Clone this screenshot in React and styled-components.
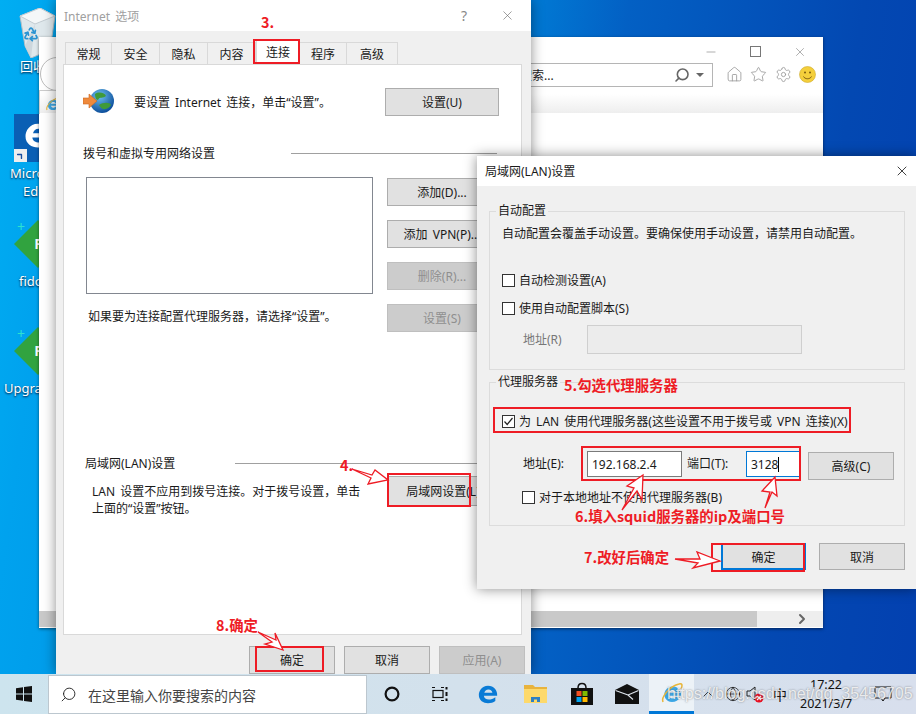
import React from "react";
import styled, { createGlobalStyle } from "styled-components";
import { Home, Star, Settings, Search, X, Minus, ChevronRight, ChevronUp, Globe, Recycle } from "lucide-react";

const UI_FONT = `"Noto Sans", "Noto Sans CJK SC", sans-serif`;

const GlobalStyle = createGlobalStyle`
  html, body {
    margin: 0;
    padding: 0;
    background: #0078d4;
  }
  * {
    box-sizing: border-box;
  }
`;

const Desktop = styled.div`
  width: 916px;
  height: 714px;
  display: flex;
  flex-direction: column;
  position: relative;
  overflow: hidden;
  font-family: ${UI_FONT};
  font-size: 12px;
  word-spacing: 2px;
  color: #1a1a1a;
  background: linear-gradient(98deg, #00aef2 0%, #00a2ee 8%, #0080d8 50%, #0360c4 62%, #0348b2 85%, #0340b0 100%);
`;

const Workspace = styled.div`
  flex: 1;
  position: relative;
  overflow: hidden;
`;

/* desktop shortcuts */
const Shortcut = styled.div`
  position: absolute;
  left: 0;
  top: ${(p) => p.$top}px;
  width: 40px;
  height: 60px;
  color: #fff;
  font-size: 13px;
  text-shadow: 0 1px 2px #013;
`;

const ShortcutLabel = styled.div`
  position: absolute;
  left: ${(p) => p.$left}px;
  top: ${(p) => p.$top}px;
  white-space: nowrap;
  line-height: 18px;
`;

const RecycleMark = styled.div`
  position: absolute;
  left: 23px;
  top: 26px;
  color: #2a93d2;
  display: flex;
`;

const Diamond = styled.div`
  position: absolute;
  left: 14px;
  top: 0;
  width: 48px;
  height: 48px;
  background: #31a33f;
  clip-path: polygon(50% 0, 100% 50%, 50% 100%, 0 50%);
  color: #fff;
  font-weight: 700;
  font-size: 14px;
  line-height: 48px;
  text-align: center;
  text-shadow: none;
`;

const PlusMark = styled.div`
  position: absolute;
  left: 17px;
  top: -1px;
  color: #2de0d0;
  font-size: 14px;
  line-height: 16px;
  text-shadow: none;
`;

const EdgeTile = styled.div`
  position: absolute;
  left: 14px;
  top: 114px;
  width: 48px;
  height: 48px;
  background: #0a5fb4;
  display: flex;
  padding: 6px 0 0 9px;
`;

const ShortcutBadge = styled.div`
  position: absolute;
  left: 14px;
  top: 149px;
  width: 13px;
  height: 13px;
  background: #eee;
  display: flex;
  align-items: center;
  justify-content: center;
`;

/* IE window behind the dialogs */
const BrowserWindow = styled.div`
  position: absolute;
  left: 39px;
  top: 37px;
  width: 784px;
  height: 591px;
  background: #fff;
  box-shadow: 0 1px 3px rgba(0, 0, 0, 0.5);
  display: flex;
  flex-direction: column;
`;

const BrowserCaption = styled.div`
  height: 26px;
  display: flex;
  justify-content: flex-end;
  align-items: center;
  gap: 32px;
  padding: 3px 16px 0 0;
  color: #777;
`;

const MaximizeBox = styled.span`
  width: 11px;
  height: 11px;
  border: 1px solid #777;
`;

const BrowserToolbar = styled.div`
  height: 31px;
  display: flex;
  justify-content: flex-end;
  align-items: center;
  gap: 7.5px;
  padding: 0 7px 8px 0;
  color: #999;
`;

const SearchField = styled.div`
  width: 200px;
  height: 24px;
  margin-right: 5px;
  border: 1px solid #b5b5b5;
  display: flex;
  align-items: center;
  gap: 6px;
  padding: 0 8px 0 6px;
  color: #666;
`;

const SearchHint = styled.span`
  flex: 1;
  color: #222;
  white-space: nowrap;
`;

const Caret = styled.span`
  width: 0;
  height: 0;
  border-left: 4px solid transparent;
  border-right: 4px solid transparent;
  border-top: 4px solid #666;
`;

const BackButton = styled.div`
  position: absolute;
  left: 1px;
  top: 20px;
  width: 34px;
  height: 34px;
  border-radius: 50%;
  border: 1px solid #bbb;
`;

const TabEdge = styled.div`
  position: absolute;
  left: 0;
  top: 53px;
  width: 20px;
  height: 24px;
  border-top: 1px solid #ccc;
  border-left: 1px solid #ccc;
  padding: 5px 0 0 5px;
`;

const BrowserBand = styled.div`
  height: 19px;
  background: linear-gradient(#fff, #eee);
`;

const BrowserPage = styled.div`
  flex: 1;
`;

const ScrollTrack = styled.div`
  height: 16px;
  margin-bottom: 1px;
  background: #eee;
  display: flex;
  align-items: center;
  justify-content: space-between;
  padding-right: 13px;
  color: #666;
`;

const ScrollThumb = styled.div`
  width: 718px;
  height: 16px;
  background: #c9c9c9;
`;

/* shared dialog parts */
const WindowFrame = styled.div`
  position: absolute;
  left: ${(p) => p.$left}px;
  top: ${(p) => p.$top}px;
  width: ${(p) => p.$width}px;
  height: ${(p) => p.$height}px;
  background: #f0f0f0;
  box-shadow: 0 0 12px rgba(0, 0, 0, 0.45);
  display: flex;
  flex-direction: column;
`;

const TitleBar = styled.div`
  height: ${(p) => p.$height}px;
  flex-shrink: 0;
  background: #fff;
  display: flex;
  align-items: center;
  padding: 0 ${(p) => p.$pad}px 0 8px;
  color: ${(p) => (p.$inactive ? "#a0a0a0" : "#1a1a1a")};
`;

const TitleText = styled.div`
  flex: 1;
`;

const HelpMark = styled.div`
  margin-right: 33px;
  font-size: 14px;
  color: #888;
`;

const Button = styled.div`
  width: ${(p) => p.$width || 86}px;
  height: ${(p) => p.$height || 28}px;
  flex-shrink: 0;
  border: ${(p) => (p.$primary ? 2 : 1)}px solid #adadad;
  display: flex;
  align-items: center;
  justify-content: center;
  white-space: nowrap;
  overflow: hidden;
  color: ${(p) => (p.$disabled ? "#8f8f8f" : "#1a1a1a")};
  background: ${(p) => (p.$disabled ? "#cccccc" : "#e1e1e1")};
  border-color: ${(p) => (p.$disabled ? "#bfbfbf" : p.$primary ? "#0078d7" : "#adadad")};
`;

/* Internet options */
const TabRow = styled.div`
  display: flex;
  margin-top: 11px;
  padding-left: 9px;
  height: 22px;
`;

const Tab = styled.div`
  width: ${(p) => p.$width}px;
  height: ${(p) => (p.$active ? 25 : 22)}px;
  margin-top: ${(p) => (p.$active ? -3 : 0)}px;
  background: ${(p) => (p.$active ? "#fff" : "#f0f0f0")};
  border: 1px solid #d9d9d9;
  border-bottom: none;
  border-left-width: ${(p) => (p.$first || p.$active ? 1 : 0)}px;
  display: flex;
  align-items: center;
  justify-content: center;
  position: relative;
`;

const TabPanel = styled.div`
  width: 459px;
  height: 571px;
  margin-left: 7px;
  padding: 23px 22px 0 21px;
  background: #fff;
  border: 1px solid #d9d9d9;
`;

const SetupRow = styled.div`
  display: flex;
  align-items: center;
  height: 28px;
`;

const SetupText = styled.div`
  flex: 1;
  margin-left: 12px;
`;

const GlobeBox = styled.div`
  width: 37px;
  height: 28px;
  flex-shrink: 0;
  svg {
    margin-left: -2px;
  }
`;

const SectionHeading = styled.div`
  display: flex;
  align-items: center;
  height: 18px;
  margin: ${(p) => p.$top}px 2px 0 ${(p) => p.$indent || 0}px;
  white-space: nowrap;
  span {
    margin-right: ${(p) => p.$gap}px;
  }
  &::after {
    content: "";
    flex: 1;
    height: 1px;
    background: #a0a0a0;
  }
`;

const DialupGrid = styled.div`
  display: grid;
  grid-template-columns: 287px 110px;
  column-gap: 14px;
  margin: 15px 0 0 1px;
`;

const ListBox = styled.div`
  width: 287px;
  height: 117px;
  border: 1px solid #828790;
  background: #fff;
`;

const HintText = styled.div`
  margin: 14px 0 0 2px;
  line-height: 18px;
  white-space: nowrap;
`;

const ButtonColumn = styled.div`
  display: flex;
  flex-direction: column;
  gap: 14px;
  padding-top: 1px;
`;

const LanRow = styled.div`
  display: flex;
  justify-content: space-between;
  margin-top: 4px;
`;

const LanText = styled.div`
  margin: 7px 0 0 7px;
  line-height: 17px;
  width: 280px;
`;

const FooterRow = styled.div`
  display: flex;
  gap: 9px;
  margin: 11px 0 0 193px;
`;

/* LAN dialog */
const DialogBody = styled.div`
  padding: 16px 11px 0 12px;
  flex: 1;
`;

const Group = styled.fieldset`
  margin: 0 0 3px;
  padding: 0 0 ${(p) => p.$bottom}px;
  border: 1px solid #dcdcdc;
  min-width: 0;
`;

const GroupLegend = styled.legend`
  margin-left: 6px;
  padding: 0 2px;
  line-height: 18px;
`;

const GroupNote = styled.div`
  margin: 5px 0 0 12px;
  line-height: 18px;
  white-space: nowrap;
`;

const CheckRow = styled.div`
  display: flex;
  align-items: center;
  gap: 4px;
  height: 18px;
  margin: ${(p) => p.$top}px 0 0 ${(p) => p.$left}px;
  white-space: nowrap;
`;

const CheckBox = styled.div`
  width: 13px;
  height: 13px;
  flex-shrink: 0;
  background: #fff;
  border: 1px solid #333;
  display: flex;
`;

const FieldRow = styled.div`
  display: flex;
  align-items: flex-start;
  margin: ${(p) => p.$top}px 0 0 33px;
  white-space: nowrap;
`;

const FieldLabel = styled.div`
  width: ${(p) => p.$width}px;
  line-height: ${(p) => p.$height}px;
  margin-top: -1px;
  flex-shrink: 0;
  color: ${(p) => p.$color || "inherit"};
`;

const TextField = styled.div`
  width: ${(p) => p.$width}px;
  height: ${(p) => p.$height}px;
  margin-top: -1px;
  flex-shrink: 0;
  background: ${(p) => (p.$disabled ? "#ececec" : "#fff")};
  border: 1px solid ${(p) => (p.$focus ? "#0078d7" : p.$disabled ? "#cfcfcf" : "#7a7a7a")};
  display: flex;
  align-items: center;
  padding-left: 4px;
`;

const TextCursor = styled.span`
  width: 1px;
  height: 15px;
  background: #000;
`;

const AdvancedButton = styled(Button)`
  margin-left: 7px;
`;

const DialogFooter = styled.div`
  display: flex;
  justify-content: flex-end;
  gap: 13px;
  margin-top: 17px;
`;

/* taskbar */
const Taskbar = styled.div`
  height: 40px;
  flex-shrink: 0;
  display: flex;
  align-items: center;
  position: relative;
  background: linear-gradient(90deg, #cde4ee, #d3e1ec 50%, #d8dfed);
`;

const StartButton = styled.div`
  width: 48px;
  display: flex;
  justify-content: center;
  flex-shrink: 0;
`;

const SearchBox = styled.div`
  width: 319px;
  height: 39px;
  margin-top: 1px;
  flex-shrink: 0;
  background: #fff;
  border: 1px solid #bcc7cf;
  display: flex;
  align-items: center;
  gap: 11px;
  padding-left: 11px;
  color: #444;
  font-size: 14px;
`;

const TaskIcon = styled.div`
  width: ${(p) => p.$width}px;
  height: 40px;
  flex-shrink: 0;
  display: flex;
  align-items: center;
  justify-content: center;
  font-size: 14px;
  color: #111;
  background: ${(p) => (p.$active ? "#ecf2f7" : "transparent")};
  border-bottom: ${(p) => (p.$active ? "3px solid #0078d7" : "none")};
`;

const ClockBlock = styled.div`
  width: 52px;
  margin-left: 8px;
  flex-shrink: 0;
  text-align: center;
  line-height: 19px;
  font-size: 12.5px;
  white-space: nowrap;
  word-spacing: 0;
  color: #111;
`;

const Watermark = styled.div`
  position: absolute;
  left: 667px;
  top: 11px;
  font-family: "Liberation Sans", sans-serif;
  font-size: 16px;
  word-spacing: 0;
  color: rgba(255, 255, 255, 0.8);
  text-shadow: 0 0 2px rgba(60, 60, 60, 0.6);
  white-space: nowrap;
`;

/* red annotations drawn on top of the screenshot */
const RedBox = styled.div`
  position: absolute;
  left: ${(p) => p.$x}px;
  top: ${(p) => p.$y}px;
  width: ${(p) => p.$w}px;
  height: ${(p) => p.$h}px;
  border: 2px solid #ee1c25;
`;

const RedNote = styled.div`
  position: absolute;
  left: ${(p) => p.$x}px;
  top: ${(p) => p.$y}px;
  font-family: "Noto Sans CJK SC", "Noto Sans", sans-serif;
  color: #ee1c25;
  font-weight: 700;
  font-size: 14.4px;
  word-spacing: 0;
  line-height: 18px;
  white-space: nowrap;
`;

const ArrowLayer = styled.svg`
  position: absolute;
  left: 0;
  top: 0;
  width: 916px;
  height: 714px;
  pointer-events: none;
`;

const ARROWS = [
  "M352 469 L372 475 L375 470 L388 480 L368 484 L371 478 Z",
  "M622 510 L634 488 L627 486 L643 475 L642 500 L637 491 Z",
  "M765 508 L770 492 L762 491 L775 477 L777 496 L772 492 Z",
  "M675 559 L700 559 L697 552 L720 561 L693 568 L698 563 Z",
  "M258 632 L276 640 L275 633 L283 650 L265 644 L272 642 Z",
];

const RecycleIcon = () => (
  <svg width="38" height="50" viewBox="0 0 38 50" style={{ position: "absolute", left: 18, top: 8 }}>
    <path d="M2 8 L22 0 L37 8 L32 42 L13 50 L7 38 Z" fill="#dfe8ec" stroke="#b4bfc6" />
    <path d="M2 8 L22 0 L37 8 L17 16 Z" fill="#f4f7f8" stroke="#c3ccd2" />
    <path d="M7 38 L17 16 L13 50 Z" fill="#cdd7dd" />
  </svg>
);

const IeIcon = ({ size }) => (
  <svg width={size} height={size} viewBox="0 0 24 24">
    <path d="M21 11.8 H9 C9.4 8.6 14.6 8.2 15.6 11 H20 C19 4.5 9 3.6 5.4 9.6 C2.4 15 6 21 12 21 C15.6 21 18.6 19.4 20 16 H15.4 C13.8 18.2 9.4 18 9 14.8 H21 Z" fill="#3ea8e6" />
    <path d="M3 21 C1 17 8 6 19 3 C22 2 23 4 21 8" fill="none" stroke="#e8b63a" strokeWidth="1.6" />
  </svg>
);

const GlobeIcon = () => (
  <svg width="32" height="26" viewBox="0 0 32 26">
    <defs>
      <radialGradient id="globeFill" cx="40%" cy="30%" r="70%">
        <stop offset="0" stopColor="#6ec0f0" />
        <stop offset="1" stopColor="#0d4f9c" />
      </radialGradient>
    </defs>
    <circle cx="19" cy="13" r="12" fill="url(#globeFill)" />
    <path d="M12 6 C16 3 22 5 23 8 C20 11 17 8 15 12 C13 12 12 9 12 6 Z M16 17 C20 14 27 14 28 17 C25 22 19 23 16 17 Z" fill="#3f9a3a" />
    <path d="M0 10 H6 V6 L14 13 L6 20 V16 H0 Z" fill="#ef8a3c" stroke="#c9661f" strokeWidth="0.6" />
  </svg>
);

const EdgeLogo = ({ size, color }) => (
  <svg width={size} height={size} viewBox="0 0 24 24">
    <path d="M12 3 C5 3 2 9 2 13 C2 19 7 22 12 22 C15 22 18 21 20 19.5 V15.5 C18 17 15 18 13 18 C10 18 7.5 16.5 7.5 14 H22 C22.5 8 18.5 3 12 3 Z M8 10.5 C8.5 8.5 10 7 12.5 7 C15 7 16.5 8.5 16.8 10.5 Z" fill={color} fillRule="evenodd" />
  </svg>
);

const WindowsLogo = () => (
  <svg width="16" height="16" viewBox="0 0 16 16" fill="#111">
    <path d="M0 2.2 L7 1.2 V7.5 H0 Z M8 1 L16 0 V7.5 H8 Z M0 8.5 H7 V14.8 L0 13.8 Z M8 8.5 H16 V16 L8 15 Z" />
  </svg>
);

const TaskViewIcon = () => (
  <svg width="16" height="16" viewBox="0 0 16 16" fill="none" stroke="#111" strokeWidth="1.2">
    <path d="M0 1.5 H3 M0 14.5 H3 M9 1.5 H12 M9 14.5 H12" />
    <rect x="1" y="4.5" width="10" height="7" />
    <path d="M14.5 1 V3.5 M14.5 6 V10 M14.5 12.5 V15" strokeWidth="2" />
  </svg>
);

const FolderIcon = () => (
  <svg width="23" height="20" viewBox="0 0 23 20">
    <path d="M0 1 H9 L11 3 H23 V19 H0 Z" fill="#e8b33d" />
    <path d="M0 5 H23 V19 H0 Z" fill="#fdd96b" />
    <path d="M7 18 V13 H16 V18 H13 V15.5 H10 V18 Z" fill="#2e7fc4" />
  </svg>
);

const StoreIcon = () => (
  <svg width="24" height="24" viewBox="0 0 24 24">
    <path d="M1 6 H23 V23 H1 Z" fill="#111" />
    <path d="M8 6 C8 0 16 0 16 6" fill="none" stroke="#111" strokeWidth="1.5" />
    <rect x="6.5" y="9" width="5" height="5" fill="#f25022" />
    <rect x="12.5" y="9" width="5" height="5" fill="#7fba00" />
    <rect x="6.5" y="15" width="5" height="5" fill="#00a4ef" />
    <rect x="12.5" y="15" width="5" height="5" fill="#ffb900" />
  </svg>
);

const MailIcon = () => (
  <svg width="24" height="20" viewBox="0 0 24 20">
    <path d="M0 6 L12 0 L24 6 V20 H0 Z" fill="#111" />
    <path d="M0.5 6.5 L13 11 L18 15.5 M13 11 L23.5 6.5" fill="none" stroke="#dfe6ee" strokeWidth="1.1" />
  </svg>
);

const CortanaIcon = () => (
  <svg width="16" height="16" viewBox="0 0 16 16">
    <circle cx="8" cy="8" r="6.4" fill="none" stroke="#111" strokeWidth="2.2" />
  </svg>
);

const VolumeIcon = () => (
  <svg width="20" height="18" viewBox="0 0 20 18">
    <path d="M1 6 H4 L9 2 V15 L4 11 H1 Z" fill="none" stroke="#222" />
    <circle cx="13" cy="13" r="4.5" fill="#e81123" />
    <path d="M11 11 L15 15 M15 11 L11 15" stroke="#fff" strokeWidth="1.2" />
  </svg>
);

const NoticeIcon = () => (
  <svg width="18" height="16" viewBox="0 0 18 16" fill="none" stroke="#111">
    <path d="M1 1 H17 V12 H11 L9 15 L7 12 H1 Z" />
  </svg>
);

const SmileIcon = () => (
  <svg width="17" height="17" viewBox="0 0 17 17">
    <circle cx="8.5" cy="8.5" r="8" fill="#f4cf3c" stroke="#cfa92a" strokeWidth="0.6" />
    <circle cx="6" cy="6.5" r="1" fill="#7a5a10" />
    <circle cx="11" cy="6.5" r="1" fill="#7a5a10" />
    <path d="M4.5 10.5 C6 13.5 11 13.5 12.5 10.5" fill="none" stroke="#7a5a10" />
  </svg>
);

const CheckMark = () => (
  <svg width="11" height="11" viewBox="0 0 11 11">
    <path d="M1.5 5.5 L4.2 8.5 L9.5 2" fill="none" stroke="#222" strokeWidth="1.2" />
  </svg>
);

const OptionsWindow = () => (
  <WindowFrame $left={56} $top={0} $width={475} $height={674}>
    <TitleBar $height={31} $pad={16} $inactive>
      <TitleText>Internet 选项</TitleText>
      <HelpMark>?</HelpMark>
      <X size={15} strokeWidth={1} color="#666" />
    </TitleBar>
    <TabRow>
      <Tab $width={47} $first>常规</Tab>
      <Tab $width={48}>安全</Tab>
      <Tab $width={48}>隐私</Tab>
      <Tab $width={48}>内容</Tab>
      <Tab $width={44} $active>连接</Tab>
      <Tab $width={47}>程序</Tab>
      <Tab $width={51}>高级</Tab>
    </TabRow>
    <TabPanel>
      <SetupRow>
        <GlobeBox><GlobeIcon /></GlobeBox>
        <SetupText>要设置 Internet 连接，单击“设置”。</SetupText>
        <Button $width={114}>设置(U)</Button>
      </SetupRow>
      <SectionHeading $top={28} $gap={76} $indent={-2}>
        <span>拨号和虚拟专用网络设置</span>
      </SectionHeading>
      <DialupGrid>
        <div>
          <ListBox />
          <HintText>如果要为连接配置代理服务器，请选择“设置”。</HintText>
        </div>
        <ButtonColumn>
          <Button $width={110}>添加(D)...</Button>
          <Button $width={110}>添加 VPN(P)...</Button>
          <Button $width={110} $disabled>删除(R)...</Button>
          <Button $width={110} $disabled>设置(S)</Button>
        </ButtonColumn>
      </DialupGrid>
      <SectionHeading $top={122} $gap={60}>
        <span>局域网(LAN)设置</span>
      </SectionHeading>
      <LanRow>
        <LanText>LAN 设置不应用到拨号连接。对于拨号设置，单击上面的“设置”按钮。</LanText>
        <Button $width={112} $height={30}>局域网设置(L)</Button>
      </LanRow>
    </TabPanel>
    <FooterRow>
      <Button>确定</Button>
      <Button>取消</Button>
      <Button $disabled>应用(A)</Button>
    </FooterRow>
  </WindowFrame>
);

const LanDialog = () => (
  <WindowFrame $left={477} $top={156} $width={439} $height={433}>
    <TitleBar $height={30} $pad={6}>
      <TitleText>局域网(LAN)设置</TitleText>
      <X size={16} strokeWidth={1.2} color="#111" />
    </TitleBar>
    <DialogBody>
      <Group $bottom={15}>
        <GroupLegend>自动配置</GroupLegend>
        <GroupNote>自动配置会覆盖手动设置。要确保使用手动设置，请禁用自动配置。</GroupNote>
        <CheckRow $top={28} $left={12}>
          <CheckBox />
          自动检测设置(A)
        </CheckRow>
        <CheckRow $top={10} $left={12}>
          <CheckBox />
          使用自动配置脚本(S)
        </CheckRow>
        <FieldRow $top={9}>
          <FieldLabel $width={64} $height={29} $color="#777">地址(R)</FieldLabel>
          <TextField $width={215} $height={29} $disabled />
        </FieldRow>
      </Group>
      <Group $bottom={19}>
        <GroupLegend>代理服务器</GroupLegend>
        <CheckRow $top={21} $left={12}>
          <CheckBox><CheckMark /></CheckBox>
          为 LAN 使用代理服务器(这些设置不用于拨号或 VPN 连接)(X)
        </CheckRow>
        <FieldRow $top={22}>
          <FieldLabel $width={64} $height={26}>地址(E):</FieldLabel>
          <TextField $width={95} $height={26}>192.168.2.4</TextField>
          <FieldLabel $width={64} $height={26}>&nbsp;端口(T):</FieldLabel>
          <TextField $width={55} $height={26} $focus>3128<TextCursor /></TextField>
          <AdvancedButton $width={86} $height={28}>高级(C)</AdvancedButton>
        </FieldRow>
        <CheckRow $top={8} $left={32}>
          <CheckBox />
          对于本地地址不使用代理服务器(B)
        </CheckRow>
      </Group>
      <DialogFooter>
        <Button $width={85} $height={27} $primary>确定</Button>
        <Button $height={27}>取消</Button>
      </DialogFooter>
    </DialogBody>
  </WindowFrame>
);

const Browser = () => (
  <BrowserWindow>
    <BackButton />
    <TabEdge><IeIcon size={16} /></TabEdge>
    <BrowserCaption>
      <Minus size={14} strokeWidth={1} />
      <MaximizeBox />
      <X size={14} strokeWidth={1} />
    </BrowserCaption>
    <BrowserToolbar>
      <SearchField>
        <SearchHint>搜索...</SearchHint>
        <Search size={16} strokeWidth={2.4} style={{ transform: "scaleX(-1)" }} />
        <Caret />
      </SearchField>
      <Home size={17} strokeWidth={1.2} />
      <Star size={17} strokeWidth={1.2} />
      <Settings size={17} strokeWidth={1.2} />
      <SmileIcon />
    </BrowserToolbar>
    <BrowserBand />
    <BrowserPage />
    <ScrollTrack>
      <ScrollThumb />
      <ChevronRight size={16} strokeWidth={3} />
    </ScrollTrack>
  </BrowserWindow>
);

const App = () => (
  <Desktop>
    <GlobalStyle />
    <Workspace>
      <Shortcut $top={0}>
        <RecycleIcon />
        <RecycleMark><Recycle size={16} strokeWidth={2.6} /></RecycleMark>
        <ShortcutLabel $left={20} $top={57}>回收</ShortcutLabel>
      </Shortcut>
      <Shortcut $top={0}>
        <EdgeTile><EdgeLogo size={30} color="#fff" /></EdgeTile>
        <ShortcutBadge>
          <ChevronUp size={11} strokeWidth={3} color="#1a4fa0" style={{ transform: "rotate(45deg)" }} />
        </ShortcutBadge>
        <ShortcutLabel $left={10} $top={164}>Micro</ShortcutLabel>
        <ShortcutLabel $left={23} $top={182}>Ed</ShortcutLabel>
      </Shortcut>
      <Shortcut $top={220}>
        <Diamond>F</Diamond>
        <PlusMark>+</PlusMark>
        <ShortcutLabel $left={19} $top={52}>fido</ShortcutLabel>
      </Shortcut>
      <Shortcut $top={327}>
        <Diamond>F</Diamond>
        <PlusMark>+</PlusMark>
        <ShortcutLabel $left={4} $top={52}>Upgra</ShortcutLabel>
      </Shortcut>
      <Browser />
      <OptionsWindow />
      <LanDialog />
    </Workspace>
    <Taskbar>
      <StartButton><WindowsLogo /></StartButton>
      <SearchBox>
        <Search size={17} strokeWidth={1.3} style={{ transform: "scaleX(-1)" }} color="#222" />
        在这里输入你要搜索的内容
      </SearchBox>
      <TaskIcon $width={49}><CortanaIcon /></TaskIcon>
      <TaskIcon $width={47}><TaskViewIcon /></TaskIcon>
      <TaskIcon $width={49}><EdgeLogo size={22} color="#0a7bd6" /></TaskIcon>
      <TaskIcon $width={46}><FolderIcon /></TaskIcon>
      <TaskIcon $width={47}><StoreIcon /></TaskIcon>
      <TaskIcon $width={44}><MailIcon /></TaskIcon>
      <TaskIcon $width={45} $active><IeIcon size={24} /></TaskIcon>
      <TaskIcon $width={28}><ChevronUp size={16} strokeWidth={1.2} color="#111" /></TaskIcon>
      <TaskIcon $width={22}><Globe size={16} strokeWidth={1.1} color="#111" /></TaskIcon>
      <TaskIcon $width={24}><VolumeIcon /></TaskIcon>
      <TaskIcon $width={24}>中</TaskIcon>
      <ClockBlock>17:22<br />2021/3/7</ClockBlock>
      <TaskIcon $width={62}><NoticeIcon /></TaskIcon>
      <Watermark>https://blog.csdn.net/qq_35456705</Watermark>
    </Taskbar>

    <RedBox $x={253} $y={39} $w={47} $h={25} />
    <RedBox $x={387} $y={473} $w={84} $h={34} />
    <RedBox $x={493} $y={407} $w={358} $h={26} />
    <RedBox $x={581} $y={446} $w={220} $h={35} />
    <RedBox $x={711} $y={543} $w={94} $h={29} />
    <RedBox $x={255} $y={646} $w={69} $h={26} />
    <RedNote $x={261} $y={13}>3.</RedNote>
    <RedNote $x={340} $y={456}>4.</RedNote>
    <RedNote $x={564} $y={376}>5.勾选代理服务器</RedNote>
    <RedNote $x={575} $y={507}>6.填入squid服务器的ip及端口号</RedNote>
    <RedNote $x={584} $y={548}>7.改好后确定</RedNote>
    <RedNote $x={216} $y={616}>8.确定</RedNote>
    <ArrowLayer viewBox="0 0 916 714">
      {ARROWS.map((d) => (
        <path key={d} d={d} fill="#fff" stroke="#ee1c25" strokeWidth="1.3" />
      ))}
    </ArrowLayer>
  </Desktop>
);

export default App;
